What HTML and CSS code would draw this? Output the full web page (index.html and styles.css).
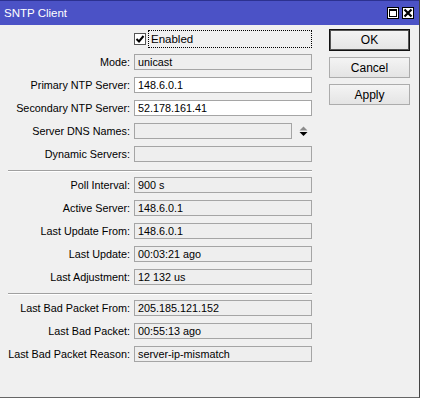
FILE: index.html
```html
<!DOCTYPE html>
<html lang="en">
<head>
    <meta charset="UTF-8">
    <title>SNTP Client</title>
    <link rel="stylesheet" href="styles.css">
</head>
<body>
    <div class="window">
        <div class="title-bar">
            <span class="title">SNTP Client</span>
            <div class="title-buttons">
                <span class="title-btn">
                    <svg width="10" height="10" viewBox="0 0 10 10"><rect x="1.5" y="1.5" width="7" height="7" fill="none" stroke="#000" stroke-width="1"/><rect x="1" y="1" width="8" height="2" fill="#000"/></svg>
                </span>
                <span class="title-btn">
                    <svg width="10" height="10" viewBox="0 0 10 10"><path d="M1.5 1.5 L8.5 8.5 M8.5 1.5 L1.5 8.5" stroke="#000" stroke-width="2.2"/></svg>
                </span>
            </div>
        </div>
        <div class="content">
            <div class="form">
                <div class="row enabled-row">
                    <span class="label"></span>
                    <div class="check-wrap">
                        <span class="checkbox">
                            <svg width="10" height="10" viewBox="0 0 10 10"><path d="M1.5 5 L4 7.5 L8.5 2" fill="none" stroke="#000" stroke-width="2"/></svg>
                        </span>
                        <span class="focus-box">Enabled</span>
                    </div>
                </div>
                <div class="row">
                    <span class="label">Mode:</span>
                    <div class="field readonly">unicast</div>
                </div>
                <div class="row">
                    <span class="label">Primary NTP Server:</span>
                    <div class="field">148.6.0.1</div>
                </div>
                <div class="row">
                    <span class="label">Secondary NTP Server:</span>
                    <div class="field">52.178.161.41</div>
                </div>
                <div class="row">
                    <span class="label">Server DNS Names:</span>
                    <div class="field-with-arrows">
                        <div class="field readonly"></div>
                        <span class="arrows">
                            <svg width="9" height="11" viewBox="0 0 9 11"><path d="M0.5 4.5 L4.5 0.5 L8.5 4.5 Z" fill="#8c8c8c"/><path d="M0.5 6 L8.5 6 L4.5 10 Z" fill="#000"/></svg>
                        </span>
                    </div>
                </div>
                <div class="row">
                    <span class="label">Dynamic Servers:</span>
                    <div class="field readonly"></div>
                </div>

                <div class="separator"></div>

                <div class="row">
                    <span class="label">Poll Interval:</span>
                    <div class="field readonly">900 s</div>
                </div>
                <div class="row">
                    <span class="label">Active Server:</span>
                    <div class="field readonly">148.6.0.1</div>
                </div>
                <div class="row">
                    <span class="label">Last Update From:</span>
                    <div class="field readonly">148.6.0.1</div>
                </div>
                <div class="row">
                    <span class="label">Last Update:</span>
                    <div class="field readonly">00:03:21 ago</div>
                </div>
                <div class="row">
                    <span class="label">Last Adjustment:</span>
                    <div class="field readonly">12 132 us</div>
                </div>

                <div class="separator"></div>

                <div class="row">
                    <span class="label">Last Bad Packet From:</span>
                    <div class="field readonly">205.185.121.152</div>
                </div>
                <div class="row">
                    <span class="label">Last Bad Packet:</span>
                    <div class="field readonly">00:55:13 ago</div>
                </div>
                <div class="row">
                    <span class="label">Last Bad Packet Reason:</span>
                    <div class="field readonly">server-ip-mismatch</div>
                </div>
            </div>
            <div class="buttons">
                <button type="button" class="btn btn-default">OK</button>
                <button type="button" class="btn">Cancel</button>
                <button type="button" class="btn">Apply</button>
            </div>
        </div>
    </div>
</body>
</html>
```

FILE: styles.css
```css
body {
    margin: 0;
    padding: 0;
    background-color: #fff;
    font-family: 'Liberation Sans', Arial, sans-serif;
    font-size: 10.8px;
    color: #000;
}
.window {
    width: 420px;
    height: 398px;
    box-sizing: border-box;
    background-color: #f0f0f0;
    border-right: 1px solid #444;
    border-bottom: 1px solid #666;
}
/* Title bar */
.title-bar {
    height: 25px;
    box-sizing: border-box;
    background-color: #4b52c6;
    border-top: 1px solid #2c3190;
    display: flex;
    align-items: center;
    padding: 0 5px 0 4px;
}
.title {
    color: #fff;
    font-size: 11.5px;
}
.title-buttons {
    margin-left: auto;
    display: flex;
    gap: 3px;
}
.title-btn {
    width: 10px;
    height: 10px;
    background-color: #fff;
    border: 1px solid #000;
    display: flex;
    align-items: center;
    justify-content: center;
}
/* Main area */
.content {
    display: flex;
}
.form {
    width: 312px;
    padding-top: 5px;
}
.row {
    display: grid;
    grid-template-columns: 130px 178px;
    column-gap: 4px;
    align-items: center;
    height: 16px;
    margin-bottom: 7px;
}
.enabled-row {
    height: 18px;
    margin-bottom: 6px;
}
.label {
    text-align: right;
    white-space: nowrap;
    line-height: 16px;
}
.field {
    height: 16px;
    box-sizing: border-box;
    border: 1px solid #a5a5a5;
    background-color: #fff;
    padding-left: 3px;
    line-height: 14px;
    white-space: nowrap;
    overflow: hidden;
}
.field.readonly {
    background-color: #eeeeee;
}
.field-with-arrows {
    display: flex;
    align-items: center;
}
.field-with-arrows .field {
    width: 161px;
}
.arrows {
    width: 17px;
    display: flex;
    justify-content: center;
    padding-left: 3px;
}
.check-wrap {
    display: flex;
    align-items: center;
    height: 18px;
}
.checkbox {
    width: 10px;
    height: 10px;
    border: 1px solid #555;
    background-color: #fff;
    display: flex;
    align-items: center;
    justify-content: center;
}
.focus-box {
    flex: 1;
    height: 18px;
    box-sizing: border-box;
    margin-left: 2px;
    border: 1px dotted #000;
    padding-left: 2px;
    line-height: 16px;
    font-size: 11.5px;
}
.separator {
    margin: 8px 0 5px 8px;
    width: 304px;
    border-top: 1px solid #a0a0a0;
    border-bottom: 1px solid #fff;
}
/* Buttons */
.buttons {
    margin-left: 17px;
    padding-top: 4px;
    display: flex;
    flex-direction: column;
    gap: 6px;
}
.btn {
    width: 81px;
    height: 21px;
    padding: 0;
    font-family: 'Liberation Sans', Arial, sans-serif;
    font-size: 12px;
    color: #000;
    background: linear-gradient(#f4f4f4, #e4e4e4);
    border: 1px solid #acacac;
    cursor: pointer;
}
.btn-default {
    height: 22px;
    border: 1px solid #111;
    box-shadow: inset 0 0 0 1px #555;
}
```
